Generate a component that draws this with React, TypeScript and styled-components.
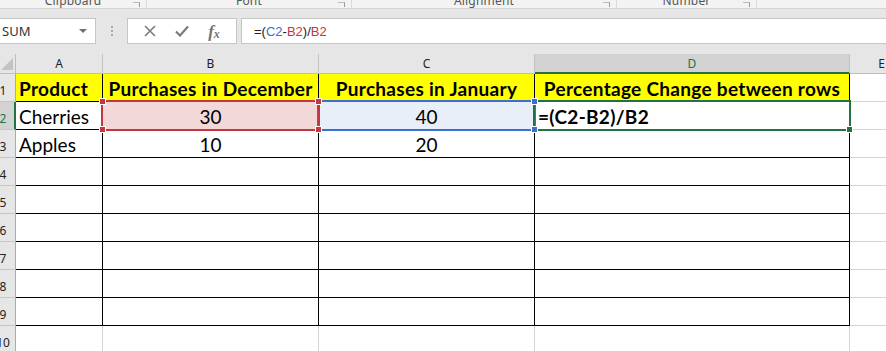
import React from 'react';
import styled, { createGlobalStyle, css } from 'styled-components';

const GlobalStyle = createGlobalStyle`
  html, body {
    margin: 0;
    padding: 0;
    background: #ffffff;
    overflow: hidden;
  }
  * {
    box-sizing: border-box;
  }
`;

const RED = '#c6363e';
const BLUE = '#3b70cc';
const GREEN = '#217346';

type Ref = 'red' | 'blue' | 'active' | undefined;

const columns = [
  { key: 'A', width: 87 },
  { key: 'B', width: 216 },
  { key: 'C', width: 216 },
  { key: 'D', width: 315 },
  { key: 'E', width: 64 },
];

interface CellData {
  text?: string;
  bold?: boolean;
  center?: boolean;
  fill?: string;
  refKind?: Ref;
}

// данные таблицы, строки 1..10, колонки A..E
const rows: CellData[][] = [
  [
    { text: 'Product', bold: true, fill: '#ffff00' },
    { text: 'Purchases in December', bold: true, center: true, fill: '#ffff00' },
    { text: 'Purchases in January', bold: true, center: true, fill: '#ffff00' },
    { text: 'Percentage Change between rows', bold: true, center: true, fill: '#ffff00' },
    {},
  ],
  [
    { text: 'Cherries' },
    { text: '30', center: true, fill: '#f3d8da', refKind: 'red' },
    { text: '40', center: true, fill: '#e9eff9', refKind: 'blue' },
    { text: '=(C2-B2)/B2', bold: true, refKind: 'active' },
    {},
  ],
  [{ text: 'Apples' }, { text: '10', center: true }, { text: '20', center: true }, {}, {}],
  ...Array.from({ length: 7 }, () => [{}, {}, {}, {}, {}]),
];

const App: React.FC = () => {
  return (
    <>
      <GlobalStyle />
      <Window>
        <RibbonStrip>
          <RibbonGroup $width={147}>
            <GroupLabel>Clipboard</GroupLabel>
            <Launcher />
          </RibbonGroup>
          <RibbonGroup $width={205}>
            <GroupLabel>Font</GroupLabel>
            <Launcher />
          </RibbonGroup>
          <RibbonGroup $width={265}>
            <GroupLabel>Alignment</GroupLabel>
            <Launcher />
          </RibbonGroup>
          <RibbonGroup $width={140}>
            <GroupLabel>Number</GroupLabel>
            <Launcher />
          </RibbonGroup>
        </RibbonStrip>

        <FormulaBand>
          <NameBox>
            SUM
            <DropArrow />
          </NameBox>
          <Grip>
            <span />
            <span />
            <span />
          </Grip>
          <ButtonsBox>
            <IconButton>
              <svg width="12" height="12" viewBox="0 0 12 12">
                <path d="M1 1 L11 11 M11 1 L1 11" stroke="#7b7b7b" strokeWidth="1.6" fill="none" />
              </svg>
            </IconButton>
            <IconButton>
              <svg width="14" height="12" viewBox="0 0 14 12">
                <path d="M1 6.5 L5 10.5 L13 1.5" stroke="#7b7b7b" strokeWidth="2.2" fill="none" />
              </svg>
            </IconButton>
            <IconButton>
              <Fx>
                f<sub>x</sub>
              </Fx>
            </IconButton>
          </ButtonsBox>
          <FormulaInput>
            =(<RefText $color={BLUE}>C2</RefText>-<RefText $color={RED}>B2</RefText>)/
            <RefText $color={RED}>B2</RefText>
          </FormulaInput>
        </FormulaBand>

        <Sheet>
          <Corner>
            <svg width="14" height="14" viewBox="0 0 14 14">
              <path d="M13 1 L13 13 L1 13 Z" fill="#c3c3c3" />
            </svg>
          </Corner>
          {columns.map((c) => (
            <ColHeader key={c.key} $active={c.key === 'D'}>
              {c.key}
            </ColHeader>
          ))}

          {rows.map((row, r) => (
            <React.Fragment key={r}>
              <RowHeader $active={r === 1}>
                <RowNum>{r + 1}</RowNum>
              </RowHeader>
              {row.map((cell, c) => (
                <Cell
                  key={c}
                  $fill={cell.fill}
                  $bold={cell.bold}
                  $center={cell.center}
                  $ruled={r < 9 && c < 4}
                >
                  {cell.text}
                  {cell.refKind && <Selection $kind={cell.refKind} />}
                  {(cell.refKind === 'red' || cell.refKind === 'blue') && (
                    <>
                      <Handle $kind={cell.refKind} $x="left" $y="top" />
                      <Handle $kind={cell.refKind} $x="right" $y="top" />
                      <Handle $kind={cell.refKind} $x="left" $y="bottom" />
                      <Handle $kind={cell.refKind} $x="right" $y="bottom" />
                    </>
                  )}
                  {cell.refKind === 'active' && <Handle $kind="active" $x="right" $y="bottom" />}
                </Cell>
              ))}
            </React.Fragment>
          ))}
        </Sheet>
      </Window>
    </>
  );
};

export default App;

const Window = styled.div`
  width: 886px;
  height: 351px;
  overflow: hidden;
  background: #ffffff;
  font-family: 'Noto Sans', 'Open Sans', sans-serif;
`;

const RibbonStrip = styled.div`
  display: flex;
  height: 9px;
  overflow: hidden;
  background: #f3f3f3;
  border-bottom: 1px solid #d5d5d5;
`;

const RibbonGroup = styled.div<{ $width: number }>`
  position: relative;
  width: ${({ $width }) => $width}px;
  height: 100%;
  display: flex;
  justify-content: center;
  align-items: flex-end;
  border-right: 1px solid #dadada;
`;

const GroupLabel = styled.span`
  font-size: 12px;
  line-height: 12px;
  color: #555555;
  margin-bottom: 1px;
  letter-spacing: 0.2px;
`;

const Launcher = styled.span`
  position: absolute;
  right: 6px;
  bottom: 1px;
  width: 7px;
  height: 5px;
  border-right: 1px solid #9a9a9a;
  border-top: 1px solid #bdbdbd;
`;

const FormulaBand = styled.div`
  display: flex;
  align-items: center;
  height: 45px;
  padding: 9px 0 10px;
  background: #e6e6e6;
`;

const boxBase = css`
  height: 26px;
  background: #ffffff;
  border: 1px solid #c6c6c6;
`;

const NameBox = styled.div`
  ${boxBase};
  position: relative;
  width: 97px;
  margin-left: -1px;
  display: flex;
  align-items: center;
  padding-left: 3px;
  font-size: 13px;
  color: #333333;
  border-left: none;
`;

const DropArrow = styled.span`
  position: absolute;
  right: 8px;
  top: 10px;
  width: 0;
  height: 0;
  border-left: 4px solid transparent;
  border-right: 4px solid transparent;
  border-top: 4px solid #707070;
`;

const Grip = styled.div`
  width: 31px;
  display: flex;
  flex-direction: column;
  align-items: center;
  gap: 2px;

  span {
    width: 2px;
    height: 2px;
    background: #a9a9a9;
  }
`;

const ButtonsBox = styled.div`
  ${boxBase};
  width: 110px;
  display: flex;
  align-items: center;
  justify-content: space-around;
  padding: 0 6px;
`;

const IconButton = styled.span`
  width: 26px;
  display: flex;
  justify-content: center;
  align-items: center;
`;

const Fx = styled.span`
  font-family: 'Liberation Serif', serif;
  font-style: italic;
  font-weight: 700;
  font-size: 17px;
  color: #757575;
  line-height: 1;

  sub {
    font-size: 12px;
    vertical-align: -1px;
    margin-left: 0;
  }
`;

const FormulaInput = styled.div`
  ${boxBase};
  flex: 1;
  margin-left: 4px;
  display: flex;
  align-items: center;
  padding-left: 12px;
  font-family: 'Liberation Sans', sans-serif;
  font-size: 13px;
  color: #222222;
  border-right: none;
  white-space: pre;
`;

const RefText = styled.span<{ $color: string }>`
  color: ${({ $color }) => $color};
`;

const Sheet = styled.div`
  display: grid;
  grid-template-columns: 16px ${columns.map((c) => `${c.width}px`).join(' ')};
  grid-template-rows: 20px repeat(10, 28px);
`;

const Corner = styled.div`
  background: #e6e6e6;
  border-right: 1px solid #bdbdbd;
  border-bottom: 1px solid #bdbdbd;
  display: flex;
  align-items: flex-end;
  justify-content: flex-end;
  padding: 0 1px 2px 0;
  overflow: hidden;
`;

const ColHeader = styled.div<{ $active?: boolean }>`
  background: ${({ $active }) => ($active ? '#d2d2d2' : '#e6e6e6')};
  border-right: 1px solid #c3c3c3;
  border-bottom: ${({ $active }) => ($active ? `2px solid ${GREEN}` : '1px solid #bdbdbd')};
  color: ${({ $active }) => ($active ? GREEN : '#222222')};
  font-size: 12px;
  display: flex;
  align-items: center;
  justify-content: center;
  padding-top: ${({ $active }) => ($active ? '1px' : '0')};
`;

const RowHeader = styled.div<{ $active?: boolean }>`
  background: ${({ $active }) => ($active ? '#d2d2d2' : '#e6e6e6')};
  border-right: ${({ $active }) => ($active ? `2px solid ${GREEN}` : '1px solid #ababab')};
  border-bottom: 1px solid #c6c6c6;
  color: ${({ $active }) => ($active ? GREEN : '#222222')};
  overflow: hidden;
  display: flex;
  align-items: center;
`;

const RowNum = styled.span`
  flex: none;
  width: 30px;
  margin-left: -12px;
  text-align: center;
  font-size: 12px;
  padding-top: 6px;
`;

const Cell = styled.div<{ $fill?: string; $bold?: boolean; $center?: boolean; $ruled?: boolean }>`
  position: relative;
  background: ${({ $fill }) => $fill || '#ffffff'};
  border-right: 1px solid ${({ $ruled }) => ($ruled ? '#000000' : '#d4d4d4')};
  border-bottom: 1px solid ${({ $ruled }) => ($ruled ? '#000000' : '#d4d4d4')};
  font-family: Lato, 'Liberation Sans', sans-serif;
  font-size: 19px;
  font-weight: ${({ $bold }) => ($bold ? 700 : 400)};
  letter-spacing: ${({ $bold }) => ($bold ? '0.3px' : '0')};
  color: #000000;
  display: flex;
  align-items: center;
  justify-content: ${({ $center }) => ($center ? 'center' : 'flex-start')};
  padding: 1px 3px 0;
  white-space: nowrap;
`;

const kindColor = (k: Ref) => (k === 'red' ? RED : k === 'blue' ? BLUE : GREEN);

const Selection = styled.span<{ $kind: Ref }>`
  position: absolute;
  top: -2px;
  left: -2px;
  right: -2px;
  bottom: -2px;
  border: 2px solid ${({ $kind }) => kindColor($kind)};
  z-index: ${({ $kind }) => ($kind === 'red' ? 3 : 2)};
  pointer-events: none;
`;

const Handle = styled.span<{ $kind: Ref; $x: 'left' | 'right'; $y: 'top' | 'bottom' }>`
  position: absolute;
  width: 7px;
  height: 7px;
  background: ${({ $kind }) => kindColor($kind)};
  border: 1px solid #ffffff;
  ${({ $x }) => ($x === 'left' ? 'left: -4px;' : 'right: -4px;')}
  ${({ $y }) => ($y === 'top' ? 'top: -4px;' : 'bottom: -4px;')}
  z-index: ${({ $kind }) => ($kind === 'red' ? 4 : 3)};
`;
